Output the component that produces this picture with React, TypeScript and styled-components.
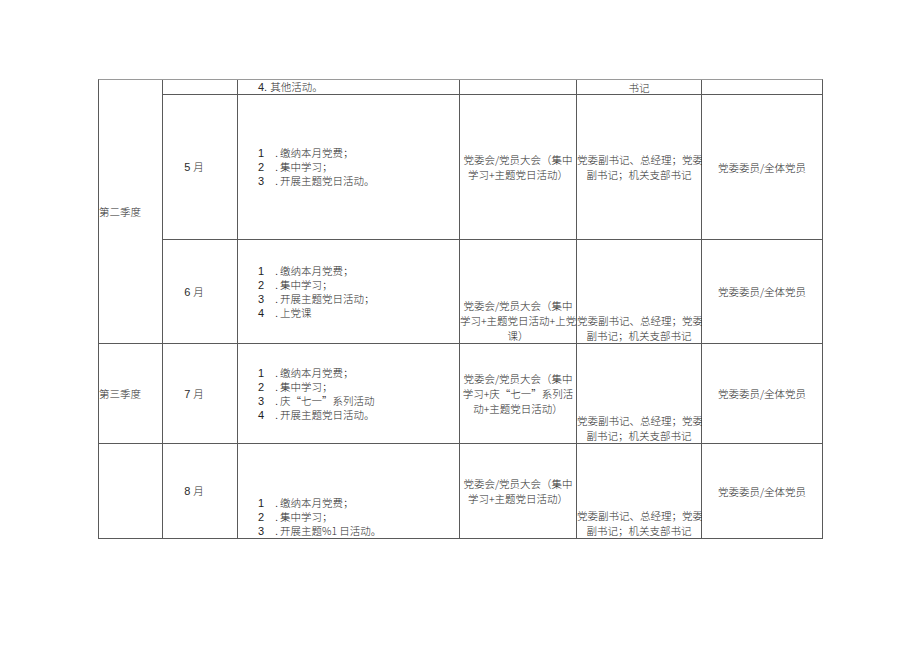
import React from "react";
import styled, { createGlobalStyle } from "styled-components";

const Global = createGlobalStyle`
  html, body { margin: 0; padding: 0; background: #ffffff; }
  body { font-family: "Noto Sans CJK SC", "Liberation Sans", sans-serif; color: #2b2b2b; }
`;

const Page = styled.div`
  padding: 79px 0 0 98px;
  width: 920px;
  height: 651px;
  box-sizing: border-box;
`;

const Table = styled.div`
  display: grid;
  grid-template-columns: 63px 74px 221px 116px 124px 120px;
  grid-template-rows: 14px 144px 103px 99px 94px;
  gap: 1px;
  width: max-content;
  background: #5a5a5a;
  border: 1px solid #5a5a5a;
  border-top-color: #9a9a9a;
`;

type V = "center" | "end";

const Cell = styled.div<{ $v?: V; $align?: "left" | "center"; $rows?: number; $padLeft?: number; $padRight?: number }>`
  background: #ffffff;
  display: flex;
  flex-direction: column;
  justify-content: ${(p) => (p.$v === "end" ? "flex-end" : "center")};
  text-align: ${(p) => p.$align ?? "center"};
  grid-row: ${(p) => (p.$rows ? `span ${p.$rows}` : "auto")};
  padding-left: ${(p) => p.$padLeft ?? 0}px;
  padding-right: ${(p) => p.$padRight ?? 0}px;
  font-size: 10.5px;
  line-height: 15px;
  font-weight: 300;
  white-space: nowrap;
  overflow: visible;
  min-width: 0;
`;

const Month = styled.span`
  font-family: "Liberation Sans", "Noto Sans CJK SC", sans-serif;
  font-size: 11px;
  & > em {
    font-style: normal;
    font-family: "Noto Sans CJK SC", sans-serif;
    font-size: 10.5px;
    font-weight: 300;
  }
`;

const List = styled.div<{ $tail?: number }>`
  display: flex;
  flex-direction: column;
  padding-left: 20px;
  margin-bottom: ${(p) => p.$tail ?? 0}px;
`;

const Item = styled.div`
  display: flex;
  align-items: baseline;
  line-height: 14px;
`;

const Num = styled.span`
  display: inline-block;
  width: 15px;
  font-family: "Liberation Sans", sans-serif;
  font-size: 11px;
  font-weight: 400;
  color: #1e1e1e;
`;

const Dot = styled.span`
  display: inline-block;
  width: 7px;
  text-align: center;
`;

const Lines = styled.div<{ $tail?: number }>`
  margin-bottom: ${(p) => p.$tail ?? 0}px;
`;

const FirstNum = styled.span`
  font-family: "Liberation Sans", sans-serif;
  font-size: 11px;
  font-weight: 400;
  margin-right: 3px;
`;

const items = (list: string[]) =>
  list.map((t, i) => (
    <Item key={i}>
      <Num>{i + 1}</Num>
      <Dot>.</Dot>
      <span>{t}</span>
    </Item>
  ));

const M = ({ n }: { n: number }) => (
  <Month>
    {n} <em>月</em>
  </Month>
);

const Meeting = ({ lines, tail }: { lines: string[]; tail?: number }) => (
  <Lines $tail={tail}>
    {lines.map((l, i) => (
      <div key={i}>{l}</div>
    ))}
  </Lines>
);

const LEAD = ["党委副书记、总经理；党委", "副书记；机关支部书记"];

export default function App() {
  return (
    <Page>
      <Global />
      <Table>
        {/* row 1 */}
        <Cell $rows={3} $align="left">第二季度</Cell>
        <Cell />
        <Cell $align="left" $padLeft={20}>
          <span>
            <FirstNum>4.</FirstNum>其他活动。
          </span>
        </Cell>
        <Cell />
        <Cell>书记</Cell>
        <Cell />

        {/* row 2 */}
        <Cell $padRight={12}>
          <M n={5} />
        </Cell>
        <Cell $align="left">
          <List>{items(["缴纳本月党费；", "集中学习；", "开展主题党日活动。"])}</List>
        </Cell>
        <Cell>
          <Meeting lines={["党委会/党员大会（集中", "学习+主题党日活动）"]} />
        </Cell>
        <Cell>
          <Meeting lines={LEAD} />
        </Cell>
        <Cell>党委委员/全体党员</Cell>

        {/* row 3 */}
        <Cell $padRight={12}>
          <M n={6} />
        </Cell>
        <Cell $align="left">
          <List>{items(["缴纳本月党费；", "集中学习；", "开展主题党日活动；", "上党课"])}</List>
        </Cell>
        <Cell $v="end">
          <Meeting lines={["党委会/党员大会（集中", "学习+主题党日活动+上党", "课）"]} />
        </Cell>
        <Cell $v="end">
          <Meeting lines={LEAD} />
        </Cell>
        <Cell>党委委员/全体党员</Cell>

        {/* row 4 */}
        <Cell $align="left">第三季度</Cell>
        <Cell $padRight={12}>
          <M n={7} />
        </Cell>
        <Cell $align="left">
          <List>{items(["缴纳本月党费；", "集中学习；", "庆“七一”系列活动", "开展主题党日活动。"])}</List>
        </Cell>
        <Cell>
          <Meeting lines={["党委会/党员大会（集中", "学习+庆“七一”系列活", "动+主题党日活动）"]} />
        </Cell>
        <Cell $v="end">
          <Meeting lines={LEAD} />
        </Cell>
        <Cell>党委委员/全体党员</Cell>

        {/* row 5 */}
        <Cell />
        <Cell $padRight={12}>
          <M n={8} />
        </Cell>
        <Cell $align="left" $v="end">
          <List>{items(["缴纳本月党费；", "集中学习；", "开展主题%1 日活动。"])}</List>
        </Cell>
        <Cell>
          <Meeting lines={["党委会/党员大会（集中", "学习+主题党日活动）"]} />
        </Cell>
        <Cell $v="end">
          <Meeting lines={LEAD} />
        </Cell>
        <Cell>党委委员/全体党员</Cell>
      </Table>
    </Page>
  );
}
